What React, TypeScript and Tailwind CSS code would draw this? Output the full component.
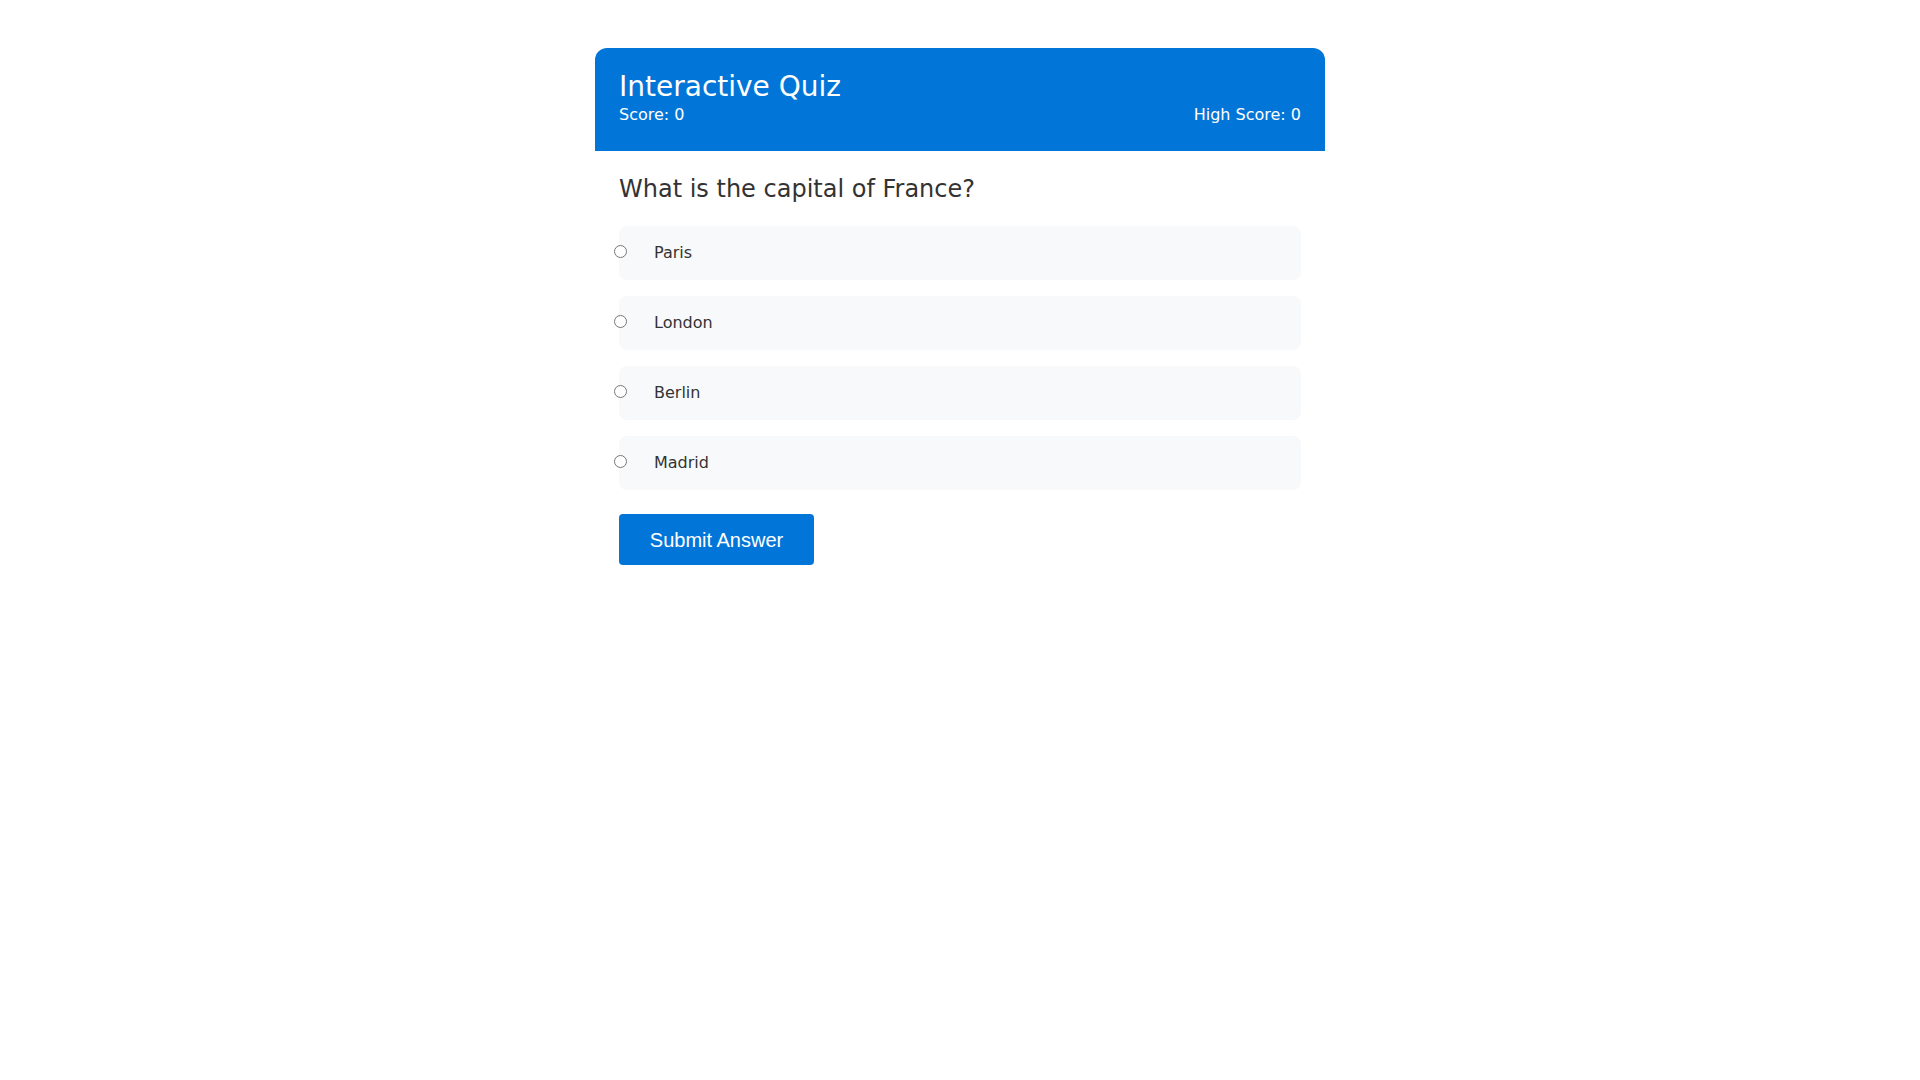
import React, { useState } from 'react';

const options = ['Paris', 'London', 'Berlin', 'Madrid'];

const App: React.FC = () => {
  const [selected, setSelected] = useState<string | null>(null);
  const [score] = useState(0);
  const [highScore] = useState(0);

  return (
    <div className="min-h-screen bg-white pt-[48px] font-['DejaVu_Sans',sans-serif]">
      <div className="mx-auto w-[730px] rounded-[12px] overflow-hidden bg-white">
        <header className="bg-[#0276d8] px-6 pt-[22px] pb-[24px] text-white">
          <h1 className="text-[28px] leading-[33px] font-normal">Interactive Quiz</h1>
          <div className="flex justify-between text-[16px] leading-[24px]">
            <span>Score: {score}</span>
            <span>High Score: {highScore}</span>
          </div>
        </header>

        <div className="px-6 pt-[24px] pb-6">
          <h2 className="text-[24px] leading-[28px] text-[#333] mb-[23px]">What is the capital of France?</h2>
          <div className="flex flex-col gap-4">
            {options.map((opt) => (
              <label
                key={opt}
                className="flex items-center h-[54px] rounded-lg bg-[#f8f9fa] cursor-pointer"
              >
                <input
                  type="radio"
                  name="answer"
                  value={opt}
                  checked={selected === opt}
                  onChange={() => setSelected(opt)}
                  className="-ml-[5px] mb-[3px] w-[13px] h-[13px]"
                />
                <span className="ml-[27px] text-[16px] text-[#333]">{opt}</span>
              </label>
            ))}
          </div>
          <button className="mt-[24px] h-[51px] w-[195px] rounded-[4px] bg-[#0276d8] text-white text-[20px] font-['Liberation_Sans',Arial,sans-serif]">
            Submit Answer
          </button>
        </div>
      </div>
    </div>
  );
};

export default App;
